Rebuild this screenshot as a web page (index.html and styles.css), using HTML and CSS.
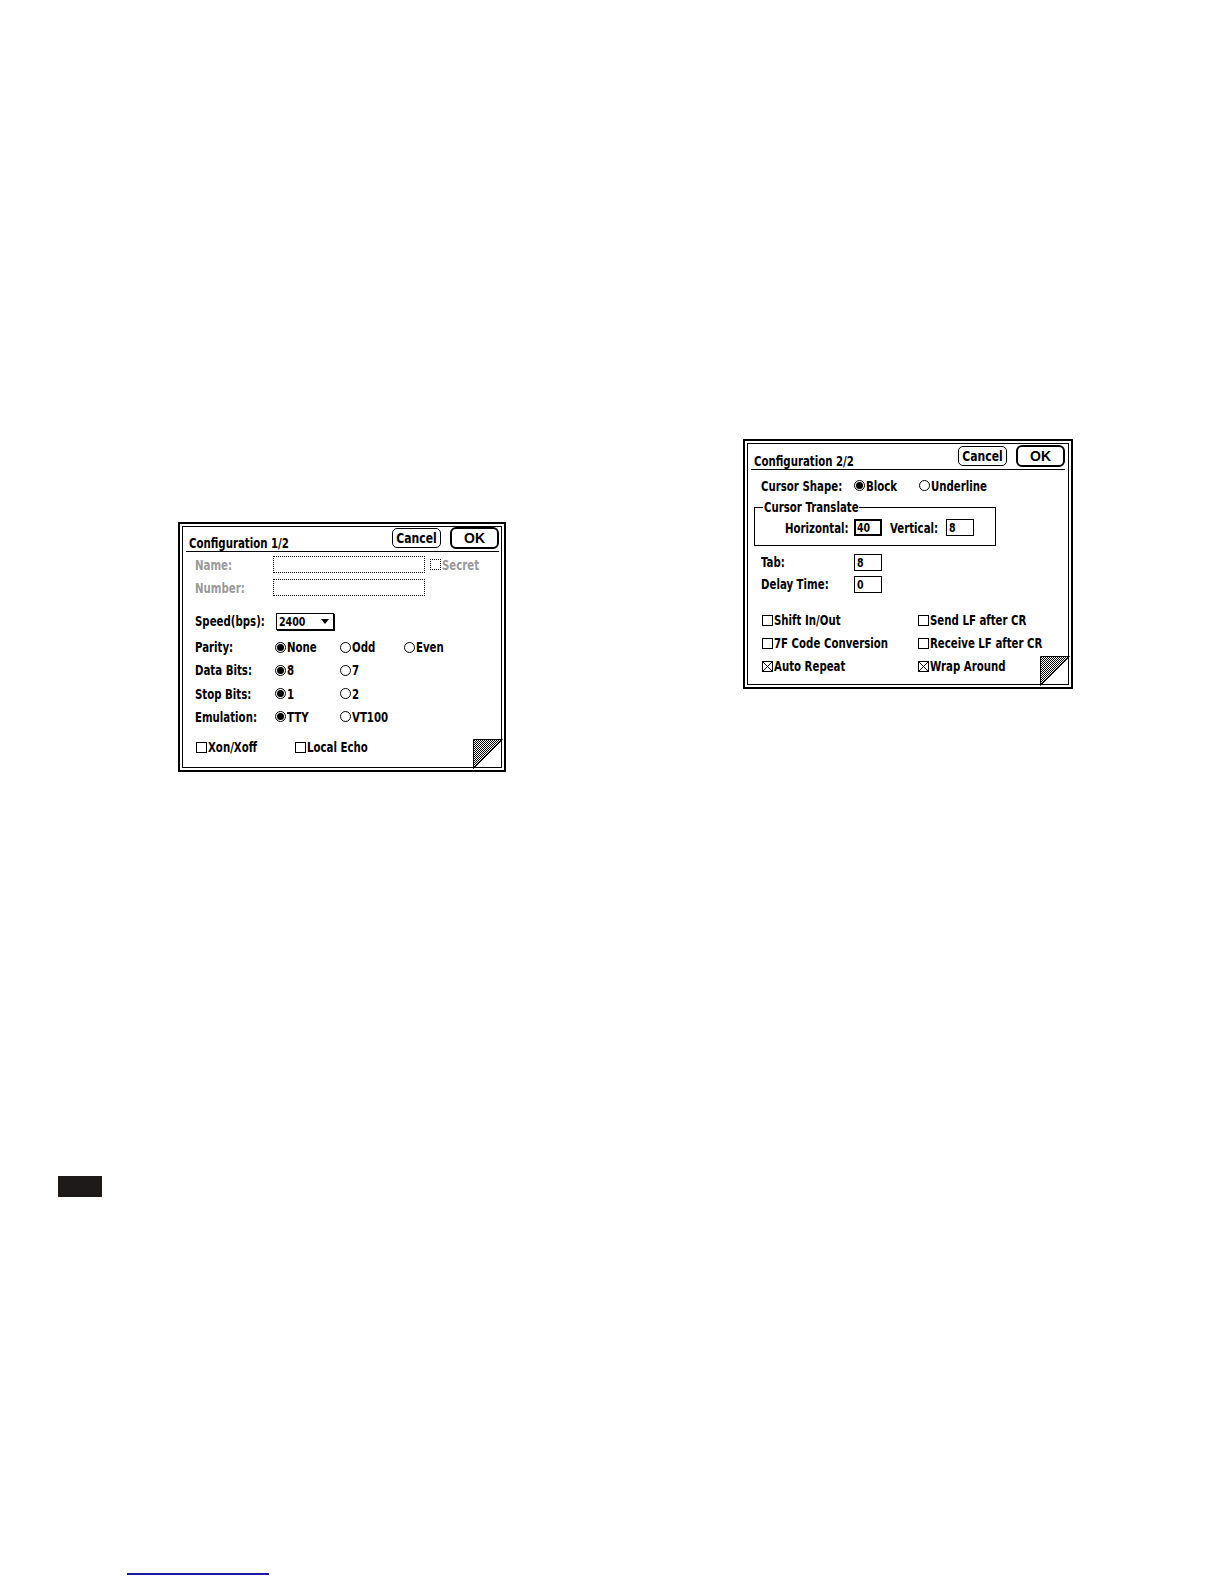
FILE: index.html
```html
<!DOCTYPE html>
<html lang="en">
<head>
<meta charset="utf-8">
<title>Configuration dialogs</title>
<link rel="stylesheet" href="styles.css">
</head>
<body>
<div class="page">
  <div class="top-row">
    <section class="dialog d1">
      <div class="inner">
        <header class="titlebar">
          <h1 class="title"><span class="t">Configuration 1/2</span></h1>
          <div class="buttons">
            <span class="btn"><span class="t">Cancel</span></span>
            <span class="btn ok">OK</span>
          </div>
        </header>
        <div class="body b1">
          <div class="row r-name">
            <span class="label dim"><span class="t">Name:</span></span>
            <span class="field dotted wide"></span>
            <span class="check dotted secret-box"></span><span class="dim"><span class="t">Secret</span></span>
          </div>
          <div class="row">
            <span class="label dim"><span class="t">Number:</span></span>
            <span class="field dotted wide"></span>
          </div>
          <div class="row r-speed">
            <span class="label"><span class="t">Speed(bps):</span></span>
            <span class="popup"><span class="t">2400</span><span class="arrow"></span></span>
          </div>
          <div class="row r-parity">
            <span class="label"><span class="t">Parity:</span></span>
            <span class="opt"><span class="radio on"></span><span class="t">None</span></span>
            <span class="opt"><span class="radio"></span><span class="t">Odd</span></span>
            <span class="opt"><span class="radio"></span><span class="t">Even</span></span>
          </div>
          <div class="row r-tight">
            <span class="label"><span class="t">Data Bits:</span></span>
            <span class="opt"><span class="radio on"></span><span class="t">8</span></span>
            <span class="opt"><span class="radio"></span><span class="t">7</span></span>
          </div>
          <div class="row r-tight">
            <span class="label"><span class="t">Stop Bits:</span></span>
            <span class="opt"><span class="radio on"></span><span class="t">1</span></span>
            <span class="opt"><span class="radio"></span><span class="t">2</span></span>
          </div>
          <div class="row r-tight">
            <span class="label"><span class="t">Emulation:</span></span>
            <span class="opt"><span class="radio on"></span><span class="t">TTY</span></span>
            <span class="opt"><span class="radio"></span><span class="t">VT100</span></span>
          </div>
          <div class="row r-checks1">
            <span class="copt c-xon"><span class="check"></span><span class="t">Xon/Xoff</span></span>
            <span class="copt"><span class="check"></span><span class="t">Local Echo</span></span>
          </div>
        </div>
        <svg class="dogear" width="30" height="30" viewBox="0 0 30 30" aria-hidden="true">
          <defs>
            <pattern id="hatch1" width="2" height="2" patternUnits="userSpaceOnUse">
              <rect width="2" height="2" fill="#fff"/>
              <rect x="0" y="0" width="1" height="1" fill="#000"/>
              <rect x="1" y="1" width="1" height="1" fill="#000"/>
            </pattern>
          </defs>
          <polygon points="0.5,0.5 29.5,0.5 0.5,29.5" fill="url(#hatch1)" stroke="#000" stroke-width="1"/>
        </svg>
      </div>
    </section>

    <section class="dialog d2">
      <div class="inner">
        <header class="titlebar">
          <h1 class="title"><span class="t">Configuration 2/2</span></h1>
          <div class="buttons">
            <span class="btn"><span class="t">Cancel</span></span>
            <span class="btn ok">OK</span>
          </div>
        </header>
        <div class="body b2">
          <div class="row r-shape">
            <span class="label"><span class="t">Cursor Shape:</span></span>
            <span class="opt"><span class="radio on"></span><span class="t">Block</span></span>
            <span class="opt"><span class="radio"></span><span class="t">Underline</span></span>
          </div>
          <fieldset class="group">
            <legend><span class="t">Cursor Translate</span></legend>
            <div class="row g-row">
              <span class="hlabel"><span class="t">Horizontal:</span></span>
              <span class="field small focus"><span class="t">40</span></span>
              <span class="vlabel"><span class="t">Vertical:</span></span>
              <span class="field small"><span class="t">8</span></span>
            </div>
          </fieldset>
          <div class="row r2 r-tab">
            <span class="label"><span class="t">Tab:</span></span>
            <span class="field small"><span class="t">8</span></span>
          </div>
          <div class="row r2">
            <span class="label"><span class="t">Delay Time:</span></span>
            <span class="field small"><span class="t">0</span></span>
          </div>
          <div class="checkgrid">
            <span class="copt"><span class="check"></span><span class="t">Shift In/Out</span></span>
            <span class="copt"><span class="check"></span><span class="t">Send LF after CR</span></span>
            <span class="copt"><span class="check"></span><span class="t">7F Code Conversion</span></span>
            <span class="copt"><span class="check"></span><span class="t">Receive LF after CR</span></span>
            <span class="copt"><span class="check x"><svg width="11" height="11" viewBox="0 0 11 11"><rect x="0.5" y="0.5" width="10" height="10" fill="none" stroke="#000"/><path d="M1 1 L10 10 M10 1 L1 10" stroke="#000" stroke-width="1" fill="none"/></svg></span><span class="t">Auto Repeat</span></span>
            <span class="copt"><span class="check x"><svg width="11" height="11" viewBox="0 0 11 11"><rect x="0.5" y="0.5" width="10" height="10" fill="none" stroke="#000"/><path d="M1 1 L10 10 M10 1 L1 10" stroke="#000" stroke-width="1" fill="none"/></svg></span><span class="t">Wrap Around</span></span>
          </div>
        </div>
        <svg class="dogear" width="30" height="30" viewBox="0 0 30 30" aria-hidden="true">
          <defs>
            <pattern id="hatch2" width="2" height="2" patternUnits="userSpaceOnUse">
              <rect width="2" height="2" fill="#fff"/>
              <rect x="0" y="0" width="1" height="1" fill="#000"/>
              <rect x="1" y="1" width="1" height="1" fill="#000"/>
            </pattern>
          </defs>
          <polygon points="0.5,0.5 29.5,0.5 0.5,29.5" fill="url(#hatch2)" stroke="#000" stroke-width="1"/>
        </svg>
      </div>
    </section>
  </div>

  <div class="tab-mark"></div>
  <div class="rule"></div>
</div>
</body>
</html>
```

FILE: styles.css
```css
* {
  box-sizing: border-box;
  margin: 0;
  padding: 0;
}

body {
  margin: 0;
  background: #fff;
  color: #000;
  font-family: "DejaVu Sans Condensed", "DejaVu Sans", "Liberation Sans", sans-serif;
  font-weight: bold;
  font-size: 14px;
}

.page {
  width: 1224px;
  height: 1584px;
  padding-top: 439px;
  overflow: hidden;
}

.top-row {
  display: flex;
  align-items: flex-start;
  padding-left: 178px;
  gap: 237px;
}

/* condensed bitmap-style text */
.t {
  display: inline-block;
  white-space: nowrap;
  transform: scaleX(0.81);
  transform-origin: 0 50%;
}

/* dialog frame */
.dialog {
  border: 2px solid #000;
  padding: 2px;
  background: #fff;
  height: 250px;
}

.d1 {
  width: 328px;
  margin-top: 83px;
}

.d2 {
  width: 330px;
}

.inner {
  position: relative;
  height: 100%;
  border: 1px solid #000;
  display: flex;
  flex-direction: column;
}

.titlebar {
  display: flex;
  align-items: center;
  justify-content: space-between;
  flex: none;
  height: 25px;
  margin: 0 2px 0 3px;
  padding: 0 0 2px 3px;
  border-bottom: 1px solid #000;
}

.d2 .titlebar {
  height: 26px;
  margin-right: 3px;
}

.title {
  align-self: flex-end;
  margin-bottom: -1px;
  font-size: 14px;
  font-weight: bold;
  line-height: 1;
}

.buttons {
  display: flex;
  align-items: center;
  gap: 9px;
}

.btn {
  display: flex;
  align-items: center;
  justify-content: center;
  width: 49px;
  height: 20px;
  border: 1px solid #000;
  border-radius: 5px;
  font-size: 14px;
  line-height: 1;
}

.btn .t {
  transform: scaleX(0.86);
  transform-origin: 50% 50%;
}

.btn.ok {
  height: 22px;
  border-width: 2px;
  border-radius: 6px;
  font-family: "Liberation Sans", "DejaVu Sans", sans-serif;
  font-size: 14px;
}

/* body rows */
.body {
  display: flex;
  flex-direction: column;
}

.b1 {
  padding-left: 12px;
}

.b2 {
  padding-left: 13px;
}

.row {
  display: flex;
  align-items: center;
  flex: none;
  height: 23px;
  line-height: 1;
  white-space: nowrap;
}

.r-name {
  margin-top: 1px;
}

.r-speed {
  margin-top: 10.5px;
}

.r-parity {
  margin-top: 3px;
}

.r-tight {
  height: 23.4px;
}

.r-checks1 {
  margin-top: 7px;
}

.label {
  flex: none;
}

.b1 .label {
  width: 80px;
}

.b2 .label {
  width: 93px;
}

.dim {
  color: #9a9a9a;
}

.field {
  display: flex;
  align-items: center;
  flex: none;
  height: 17px;
  border: 1px solid #000;
  padding-left: 2px;
  font-size: 13px;
}

.field.dotted {
  border-style: dotted;
}

.field.wide {
  width: 152px;
  margin-left: -2px;
}

.field.small {
  width: 28px;
}

.field.focus {
  border-width: 2px;
  padding-left: 1px;
}

.popup {
  display: flex;
  align-items: center;
  justify-content: space-between;
  flex: none;
  width: 58px;
  height: 17px;
  margin-left: 1px;
  border: 1px solid #000;
  box-shadow: 1px 1px 0 #000;
  padding: 0 4px 0 2px;
  font-size: 13px;
}

.arrow {
  width: 0;
  height: 0;
  border-left: 4px solid transparent;
  border-right: 4px solid transparent;
  border-top: 5px solid #000;
}

.opt {
  display: flex;
  align-items: center;
  flex: none;
  width: 64px;
}

.b1 .opt:nth-child(2) {
  width: 65px;
}

.b2 .opt {
  width: 65px;
}

.opt:last-child {
  width: auto;
}

.radio {
  position: relative;
  width: 11px;
  height: 11px;
  margin-right: 1px;
  border: 1px solid #000;
  border-radius: 50%;
  flex: none;
}

.radio.on::after {
  content: "";
  position: absolute;
  inset: 1px;
  border-radius: 50%;
  background: #000;
}

.check {
  display: inline-flex;
  width: 11px;
  height: 11px;
  border: 1px solid #000;
  margin-right: 1px;
  flex: none;
}

.check.dotted {
  border-style: dotted;
}

.check.x {
  border: none;
}

.check.x svg {
  display: block;
}

.secret-box {
  margin-left: 5px;
}

.copt {
  display: flex;
  align-items: center;
  padding-left: 1px;
}

.c-xon {
  width: 99px;
}

/* group box */
.group {
  flex: none;
  width: 242px;
  margin: 3px 0 0 -7px;
  padding: 0 0 6px 0;
  border: 1px solid #000;
}

.group legend {
  width: 96px;
  margin-left: 8px;
  padding: 0 1px;
  font-size: 14px;
  line-height: 15px;
}

.g-row {
  margin-top: 1px;
  padding-left: 30px;
}

.hlabel {
  flex: none;
  width: 69px;
}

.vlabel {
  flex: none;
  margin-left: 8px;
  width: 56px;
}

.r-shape {
  margin-top: 4px;
}

.r2 {
  height: 22px;
}

.r-tab {
  margin-top: 5px;
}

.checkgrid {
  display: grid;
  grid-template-columns: 156px 1fr;
  grid-auto-rows: 23.2px;
  align-items: center;
  margin-top: 13.5px;
  line-height: 1;
  white-space: nowrap;
}

.dogear {
  position: absolute;
  right: -2px;
  bottom: -2px;
  display: block;
}

/* page marks */
.tab-mark {
  width: 44px;
  height: 21px;
  margin: 404px 0 0 58px;
  background: #1e1a1a;
}

.rule {
  width: 142px;
  height: 2px;
  margin: 376px 0 0 127px;
  background: #1a1aa8;
}
```
